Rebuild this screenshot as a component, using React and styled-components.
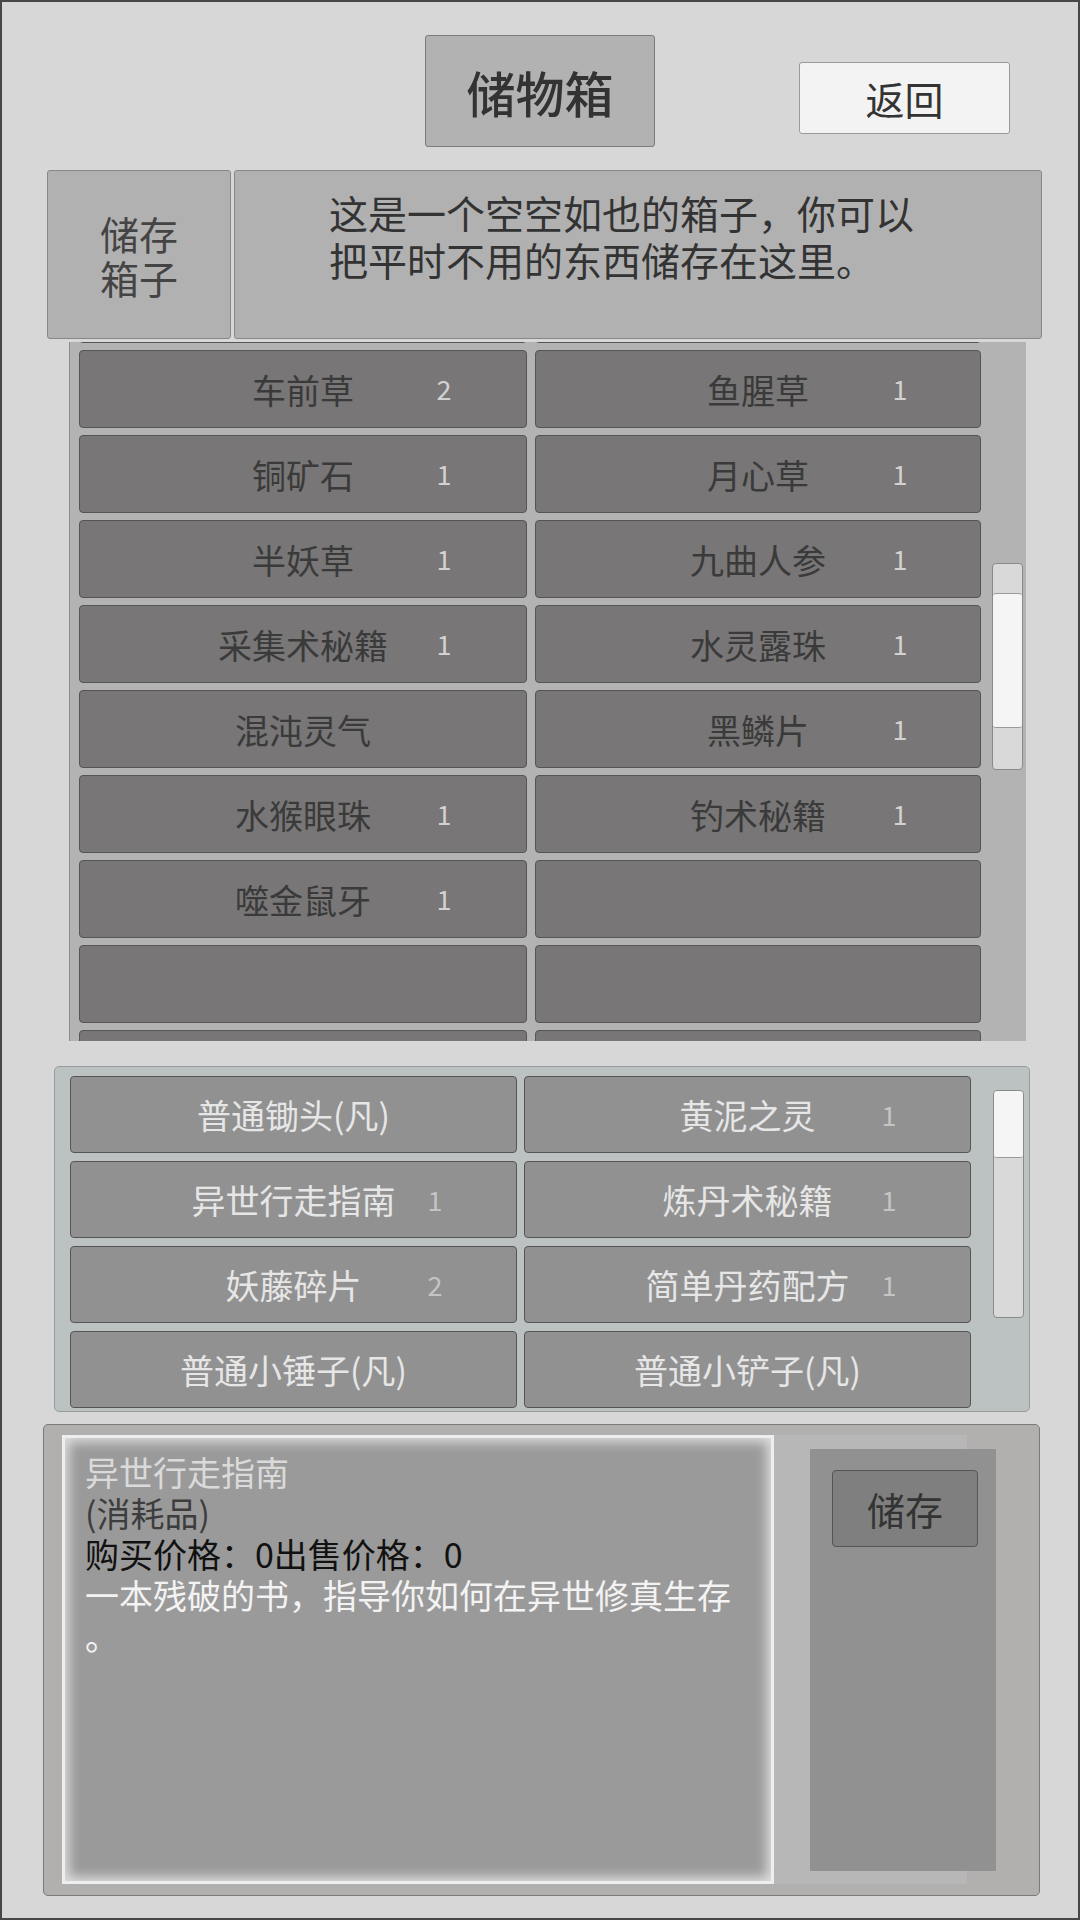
import styled, { createGlobalStyle } from "styled-components";

const GlobalStyle = createGlobalStyle`
    body {
        margin: 0;
        background: #d7d7d7;
        font-family: "Noto Sans CJK SC", "Noto Sans", sans-serif;
    }
`;

const Screen = styled.div`
    width: 1080px;
    height: 1920px;
    box-sizing: border-box;
    border: 2px solid #474747;
    background: #d7d7d7;
    display: flex;
    flex-direction: column;
    overflow: hidden;
`;

const TopBar = styled.div`
    display: grid;
    grid-template-columns: 1fr 230px 1fr;
    align-items: start;
    padding-top: 33px;
`;

const TitleBox = styled.div`
    grid-column: 2;
    height: 112px;
    box-sizing: border-box;
    background: #b2b2b2;
    border: 1px solid #7b7b7b;
    border-radius: 3px;
    display: flex;
    align-items: center;
    justify-content: center;
    font-size: 49px;
    font-weight: 500;
    color: #333;
`;

const BackButton = styled.button`
    justify-self: start;
    margin: 27px 0 0 144px;
    width: 211px;
    height: 72px;
    box-sizing: border-box;
    background: #f3f3f3;
    border: 1px solid #9a9a9a;
    border-radius: 3px;
    font-family: inherit;
    font-size: 39px;
    color: #333;
    padding: 0;
`;

const InfoPanel = styled.div`
    display: flex;
    gap: 3px;
    margin: 23px 0 0 45px;
    width: 995px;
    height: 169px;
`;

const InfoLabel = styled.div`
    width: 184px;
    box-sizing: border-box;
    background: #b1b1b1;
    border: 1px solid #888;
    border-radius: 3px;
    display: flex;
    align-items: center;
    justify-content: center;
    text-align: center;
    font-size: 39px;
    line-height: 44px;
    color: #444;
`;

const InfoText = styled.div`
    flex: 1;
    box-sizing: border-box;
    background: #b1b1b1;
    border: 1px solid #888;
    border-radius: 3px;
    padding: 18px 0 0 94px;
    font-size: 39px;
    line-height: 47px;
    color: #333;
`;

const StorePanel = styled.div`
    position: relative;
    margin: 3px 0 0 67px;
    width: 957px;
    height: 699px;
    box-sizing: border-box;
    background: #b3b3b3;
    border-left: 1px solid #8a8a8a;
    overflow: hidden;
`;

const BagPanel = styled.div`
    position: relative;
    margin: 25px 0 0 52px;
    width: 976px;
    height: 346px;
    box-sizing: border-box;
    background: #bcc1c1;
    border: 1px solid #979d9d;
    border-radius: 5px;
    overflow: hidden;
`;

const ItemGrid = styled.div`
    display: grid;
    grid-template-columns: ${(p) => p.$cols};
    grid-auto-rows: ${(p) => p.$row}px;
    column-gap: ${(p) => p.$colGap}px;
    row-gap: ${(p) => p.$rowGap}px;
    padding-left: ${(p) => p.$left}px;
    margin-top: ${(p) => p.$top}px;
`;

const Cell = styled.div`
    position: relative;
    box-sizing: border-box;
    background: ${(p) => (p.$light ? "#919191" : "#787676")};
    border: 1px solid #555;
    border-radius: 4px;
    display: flex;
    align-items: center;
    justify-content: center;
    font-size: 34px;
    color: ${(p) => (p.$light ? "#e6e6e6" : "#3a3a3a")};
`;

const Count = styled.span`
    position: absolute;
    left: 364px;
    top: 50%;
    transform: translate(-50%, -52%);
    font-size: 27px;
    color: ${(p) => (p.$light ? "#c4c4c4" : "#d2d2d2")};
`;

const Track = styled.div`
    position: absolute;
    left: ${(p) => p.$left}px;
    top: ${(p) => p.$top}px;
    width: 31px;
    height: ${(p) => p.$height}px;
    box-sizing: border-box;
    background: #d9d9d9;
    border: 1px solid #8a8a8a;
    border-radius: 4px;
    overflow: hidden;
`;

const Thumb = styled.div`
    margin-top: ${(p) => p.$offset}px;
    height: ${(p) => p.$size}px;
    box-sizing: border-box;
    background: #f5f5f5;
    border-bottom: 1px solid #9a9a9a;
    border-top: ${(p) => (p.$offset ? "1px solid #9a9a9a" : "none")};
    border-radius: 3px;
`;

const DetailPanel = styled.div`
    display: flex;
    align-items: flex-start;
    margin: 12px 0 0 41px;
    width: 997px;
    height: 472px;
    box-sizing: border-box;
    padding: 10px 0 0 18px;
    background: #b1b0ae;
    border: 1px solid #7a7a7a;
    border-radius: 5px;
`;

const Backing = styled.div`
    display: flex;
    align-items: flex-start;
    width: 905px;
    height: 449px;
    flex-shrink: 0;
    background: #b7b7b7;
`;

const DescBox = styled.div`
    width: 712px;
    height: 100%;
    flex-shrink: 0;
    box-sizing: border-box;
    padding: 16px 0 0 23px;
    background: #9a9a9a;
    box-shadow: inset 0 0 0 3px #eeeeee, inset 0 0 12px 7px #dedede;
`;

const DescLine = styled.div`
    font-size: 34px;
    line-height: 41px;
    white-space: nowrap;
    color: ${(p) => p.$color};
`;

const SidePanel = styled.div`
    flex-shrink: 0;
    margin: 14px 0 0 36px;
    width: 186px;
    height: 422px;
    box-sizing: border-box;
    padding: 21px 0 0 22px;
    background: #919191;
`;

const StoreButton = styled.button`
    width: 146px;
    height: 77px;
    box-sizing: border-box;
    background: #7e7f7e;
    border: 1px solid #555;
    border-radius: 4px;
    font-family: inherit;
    font-size: 38px;
    color: #333;
    padding: 0;
`;

const storeItems = [
    ["", null], ["", null],
    ["车前草", 2], ["鱼腥草", 1],
    ["铜矿石", 1], ["月心草", 1],
    ["半妖草", 1], ["九曲人参", 1],
    ["采集术秘籍", 1], ["水灵露珠", 1],
    ["混沌灵气", null], ["黑鳞片", 1],
    ["水猴眼珠", 1], ["钓术秘籍", 1],
    ["噬金鼠牙", 1], ["", null],
    ["", null], ["", null],
    ["", null], ["", null],
];

const bagItems = [
    ["普通锄头(凡)", null], ["黄泥之灵", 1],
    ["异世行走指南", 1], ["炼丹术秘籍", 1],
    ["妖藤碎片", 2], ["简单丹药配方", 1],
    ["普通小锤子(凡)", null], ["普通小铲子(凡)", null],
];

function Item({ name, count, light }) {
    return (
        <Cell $light={light}>
            {name}
            {count != null && <Count $light={light}>{count}</Count>}
        </Cell>
    );
}

export default function App() {
    return (
        <>
            <GlobalStyle />
            <Screen>
                <TopBar>
                    <TitleBox>储物箱</TitleBox>
                    <BackButton>返回</BackButton>
                </TopBar>

                <InfoPanel>
                    <InfoLabel>储存<br />箱子</InfoLabel>
                    <InfoText>
                        这是一个空空如也的箱子，你可以<br />
                        把平时不用的东西储存在这里。
                    </InfoText>
                </InfoPanel>

                <StorePanel>
                    <ItemGrid $cols="448px 446px" $row={78} $colGap={8} $rowGap={7} $left={9} $top={-77}>
                        {storeItems.map(([name, count], i) => (
                            <Item key={i} name={name} count={count} />
                        ))}
                    </ItemGrid>
                    <Track $left={922} $top={221} $height={207}>
                        <Thumb $offset={29} $size={135} />
                    </Track>
                </StorePanel>

                <BagPanel>
                    <ItemGrid $cols="447px 447px" $row={77} $colGap={7} $rowGap={8} $left={15} $top={9}>
                        {bagItems.map(([name, count], i) => (
                            <Item key={i} name={name} count={count} light />
                        ))}
                    </ItemGrid>
                    <Track $left={938} $top={23} $height={228}>
                        <Thumb $offset={0} $size={67} />
                    </Track>
                </BagPanel>

                <DetailPanel>
                    <Backing>
                        <DescBox>
                            <DescLine $color="#dadada">异世行走指南</DescLine>
                            <DescLine $color="#3d3d3d">(消耗品)</DescLine>
                            <DescLine $color="#111">购买价格：0出售价格：0</DescLine>
                            <DescLine $color="#f3f3f3">一本残破的书，指导你如何在异世修真生存</DescLine>
                            <DescLine $color="#f3f3f3">。</DescLine>
                        </DescBox>
                        <SidePanel>
                            <StoreButton>储存</StoreButton>
                        </SidePanel>
                    </Backing>
                </DetailPanel>
            </Screen>
        </>
    );
}
